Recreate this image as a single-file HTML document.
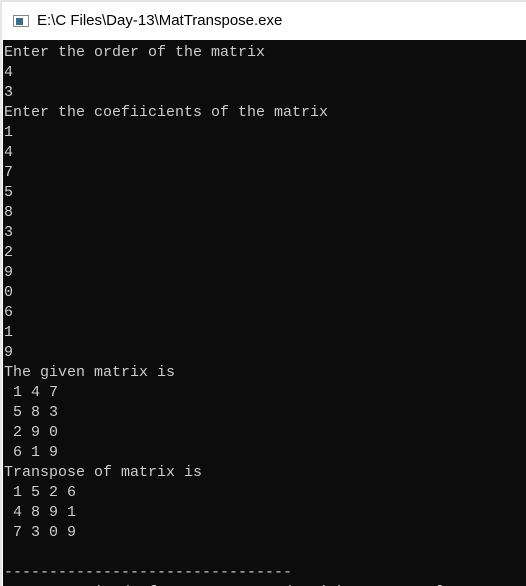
<!DOCTYPE html>
<html><head><style>
html,body{margin:0;padding:0;width:526px;height:586px;overflow:hidden;background:#fff}
.top{position:absolute;left:0;top:0;width:526px;height:2px;background:#e3e3e3}
.lb{position:absolute;left:0;top:0;width:2px;height:586px;background:#e6e6e6}
.title{position:absolute;left:0;top:2px;width:526px;height:38px;background:#fff;font:15px "Liberation Sans",sans-serif;color:#000}
.title span{position:absolute;left:37px;top:10px}
.icon{position:absolute;left:13px;top:13px;width:16px;height:12px;border:1px solid #888;background:#fff;box-sizing:border-box}
.icon i{position:absolute;left:2px;top:2px;width:7px;height:7px;background:#3a6e88}
.con{position:absolute;left:3px;top:40px;width:523px;height:546px;background:#0c0c0c;color:#cccccc;font:15px/20px "Liberation Mono",monospace;white-space:pre;padding-left:1px;padding-top:3px;box-sizing:border-box;overflow:hidden}
</style></head><body>
<div class="top"></div>
<div class="title"><div class="icon"><i></i></div><span>E:\C Files\Day-13\MatTranspose.exe</span></div>
<div class="con">Enter the order of the matrix
4
3
Enter the coefiicients of the matrix
1
4
7
5
8
3
2
9
0
6
1
9
The given matrix is
 1 4 7
 5 8 3
 2 9 0
 6 1 9
Transpose of matrix is
 1 5 2 6
 4 8 9 1
 7 3 0 9

--------------------------------
Process exited after 43.7 seconds with return value 0</div>
<div class="lb"></div>
</body></html>
